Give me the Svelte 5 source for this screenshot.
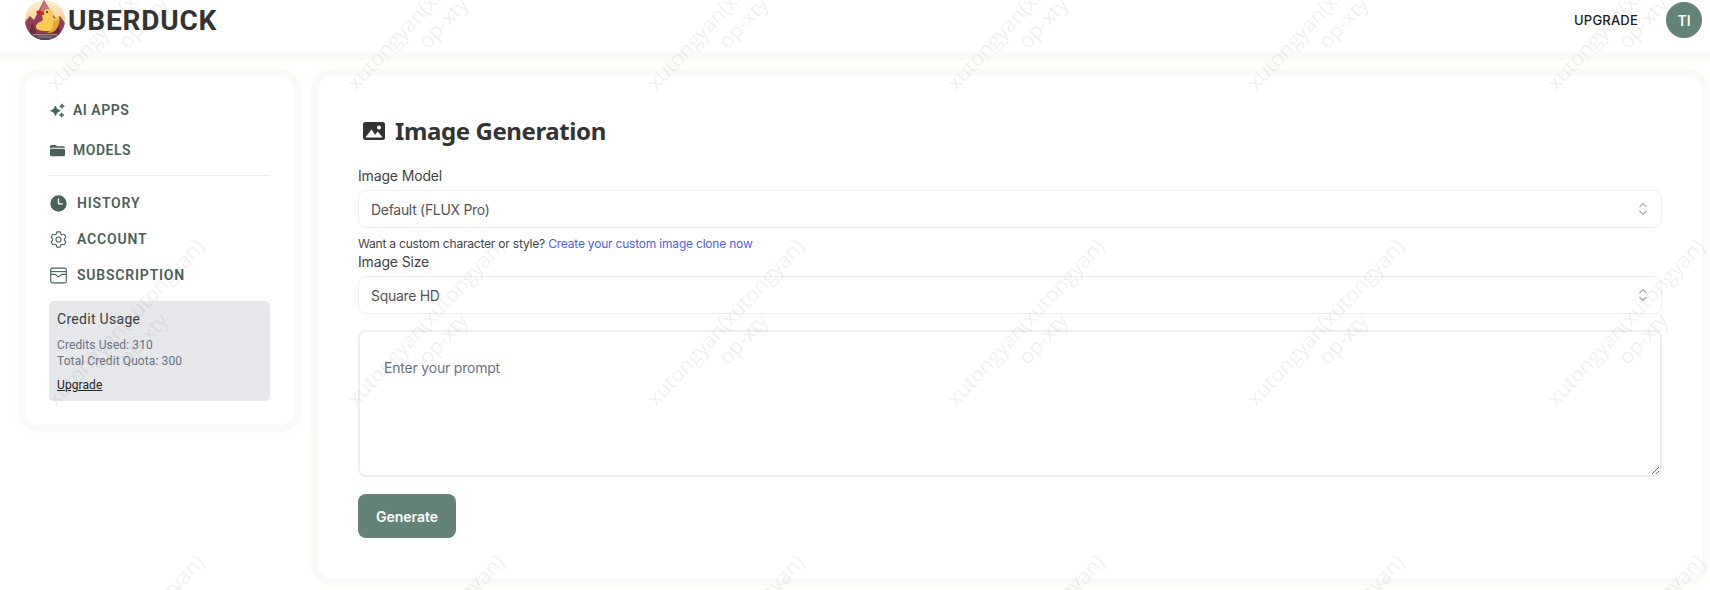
<script>
  const topNav = [
    { label: "AI APPS", icon: "sparkles" },
    { label: "MODELS", icon: "folder" },
  ];
  const bottomNav = [
    { label: "HISTORY", icon: "clock" },
    { label: "ACCOUNT", icon: "cog" },
    { label: "SUBSCRIPTION", icon: "box" },
  ];

  // watermark tiles repeat across the page
  const marks = [];
  for (let row = 0; row < 3; row++) {
    for (let col = -1; col < 6; col++) {
      marks.push({ x: 134 + col * 300, y: 14 + row * 316 });
    }
  }
</script>

{#snippet icon(name)}
  {#if name === "sparkles"}
    <svg class="nav-icon" viewBox="0 0 16 16" fill="currentColor" stroke="currentColor" stroke-width="0.800" stroke-linejoin="round">
      <path d="M5.800 3.200l1.700 3.400 3.400 1.700-3.400 1.700-1.700 3.400-1.700-3.400L.7 8.300l3.400-1.700z" />
      <path d="M12.800.9l.8 1.700 1.700.8-1.700.8-.8 1.700-.8-1.700-1.700-.8 1.700-.8z" />
      <path d="M12.400 10.400l.8 1.600 1.600.8-1.600.8-.8 1.600-.8-1.600-1.600-.8 1.600-.8z" />
    </svg>
  {:else if name === "folder"}
    <svg class="nav-icon" viewBox="0 0 16 16" fill="currentColor">
      <path d="M1.600 2h3.700c.4 0 .8.200 1.100.5l1 1h6.900c.9 0 1.600.7 1.600 1.500H2.200C1.500 5 .9 5.300.5 5.800c-.3-.2-.5-.4-.5-.8V3.600C0 2.700.7 2 1.600 2z" />
      <path d="M1.500 6h13c.8 0 1.500.6 1.500 1.400v5c0 .9-.7 1.600-1.600 1.600H1.600C.7 14 0 13.300 0 12.400V7.500C0 6.700.7 6 1.500 6z" />
    </svg>
  {:else if name === "clock"}
    <svg class="nav-icon wide" viewBox="0 0 24 24">
      <circle cx="12" cy="12" r="11.500" fill="currentColor" />
      <path d="M12 5.500V12.500H17.500" fill="none" stroke="#fff" stroke-width="2" stroke-linecap="round" stroke-linejoin="round" />
    </svg>
  {:else if name === "cog"}
    <svg class="nav-icon wide" viewBox="2 2 20 20" fill="none" stroke="currentColor" stroke-width="1.300">
      <path d="M9.594 3.94c.09-.542.56-.94 1.11-.94h2.593c.55 0 1.020.398 1.110.94l.213 1.281c.063.374.313.686.645.87.074.04.147.083.22.127.325.196.72.257 1.075.124l1.217-.456a1.125 1.125 0 0 1 1.370.49l1.296 2.247a1.125 1.125 0 0 1-.26 1.431l-1.003.827c-.293.241-.438.613-.43.992a7.723 7.723 0 0 1 0 .255c-.008.378.137.75.43.991l1.004.827c.424.35.534.955.26 1.43l-1.298 2.247a1.125 1.125 0 0 1-1.369.491l-1.217-.456c-.355-.133-.75-.072-1.076.124a6.470 6.470 0 0 1-.22.128c-.331.183-.581.495-.644.869l-.213 1.281c-.09.543-.56.94-1.110.94h-2.594c-.55 0-1.019-.398-1.110-.94l-.213-1.281c-.062-.374-.312-.686-.644-.87a6.520 6.520 0 0 1-.22-.127c-.325-.196-.72-.257-1.076-.124l-1.217.456a1.125 1.125 0 0 1-1.369-.49l-1.297-2.247a1.125 1.125 0 0 1 .26-1.431l1.004-.827c.292-.24.437-.613.43-.991a6.932 6.932 0 0 1 0-.255c.007-.38-.138-.751-.43-.992l-1.004-.827a1.125 1.125 0 0 1-.26-1.430l1.297-2.247a1.125 1.125 0 0 1 1.370-.491l1.216.456c.356.133.751.072 1.076-.124.072-.044.146-.086.22-.128.332-.183.582-.495.644-.869l.214-1.280Z" />
      <path d="M15 12a3 3 0 1 1-6 0 3 3 0 0 1 6 0Z" />
    </svg>
  {:else}
    <svg class="nav-icon wide" viewBox="0 0 24 24" fill="none" stroke="currentColor" stroke-width="1.600" stroke-linejoin="round">
      <rect x="1" y="1.500" width="22" height="21" rx="2.500" />
      <path d="M1 6.500h22" />
      <path d="M1 10.500h6.500l4.500 3.500 4.500-3.500H23" />
    </svg>
  {/if}
{/snippet}

<header class="topbar">
  <div class="brand">
    <svg class="logo" viewBox="0 0 40 40">
      <defs>
        <clipPath id="logo-clip"><circle cx="20" cy="20" r="20" /></clipPath>
        <linearGradient id="logo-sky" x1="0" y1="0" x2="0" y2="1">
          <stop offset="0" stop-color="#fdf3d4" />
          <stop offset="0.6" stop-color="#f8c98c" />
        </linearGradient>
      </defs>
      <g clip-path="url(#logo-clip)">
        <rect width="40" height="40" fill="url(#logo-sky)" />
        <path d="M0 22l5-6 4 4L19 0l6 10 6 9 4-3 5 7v17H0z" fill="#8f4058" />
        <path d="M19 0l6 10-3 4-2-5-3 5-2-3z" fill="#c9737c" />
        <path d="M4 34l3-11 3 5 2 6zM36 34l-3-10-3 5-2 5z" fill="#6b2c42" />
        <path d="M11 27c0-3 3-5 6-6 2-1 0-3 0-6 0-3 3-6 6-6s6 3 5 7c-.4 2 2 3 4 2l2-2c1 3 0 6-1 9-1 4-5 6-11 6s-11-1-11-4z" fill="#f8cb55" />
        <path d="M28 21c3 0 5-1 6-4 1 4 0 8-2 11-2 4-6 5-10 5 4-2 7-6 6-12z" fill="#e6a635" />
        <path d="M19 12c-4-2-7-2-8 0 1 2 5 3 8 3z" fill="#d8262c" />
        <circle cx="22" cy="12" r="1" fill="#222" />
        <rect y="33" width="40" height="7" fill="#54465e" />
        <path d="M8 34h24v1.200H8zM13 36.500h14v1H13z" fill="#a68a7c" />
      </g>
    </svg>
    <span class="wordmark">UBERDUCK</span>
  </div>
  <div class="account">
    <span class="upgrade">UPGRADE</span>
    <span class="avatar">TI</span>
  </div>
</header>

<div class="page">
  <aside class="card sidebar">
    <nav class="nav-top">
      {#each topNav as item}
        <div class="nav-item first">{@render icon(item.icon)}<span>{item.label}</span></div>
      {/each}
    </nav>
    <hr />
    <nav class="nav-bottom">
      {#each bottomNav as item}
        <div class="nav-item second">{@render icon(item.icon)}<span>{item.label}</span></div>
      {/each}
    </nav>
    <div class="credits">
      <div class="credits-title">Credit Usage</div>
      <div class="credits-line first-line">Credits Used: 310</div>
      <div class="credits-line">Total Credit Quota: 300</div>
      <span class="credits-link">Upgrade</span>
    </div>
  </aside>

  <main class="card content">
    <h1>
      <svg class="title-icon" viewBox="0 0 22 18">
        <path fill="#333" fill-rule="evenodd" d="M2.500 0h17A2.500 2.500 0 0 1 22 2.500v13a2.500 2.500 0 0 1-2.500 2.500h-17A2.500 2.500 0 0 1 0 15.500v-13A2.500 2.500 0 0 1 2.500 0zM16 3.400a2 2 0 1 0 0 4 2 2 0 0 0 0-4zM2.400 15.600h17.200l-4.800-6-2.800 3.200-3.400-5.200z" />
      </svg>
      Image Generation
    </h1>

    <label class="field-label" for="model">Image Model</label>
    <div class="select-wrap">
      <select id="model"><option>Default (FLUX Pro)</option></select>
      <svg class="chevrons" viewBox="0 0 10 14" fill="none" stroke="#a8a8a8" stroke-width="1.200"><path d="M1.500 5L5 1.500 8.500 5M1.500 9L5 12.500 8.500 9" /></svg>
    </div>
    <p class="hint">Want a custom character or style? <span class="hint-link">Create your custom image clone now</span></p>

    <label class="field-label" for="size">Image Size</label>
    <div class="select-wrap">
      <select id="size"><option>Square HD</option></select>
      <svg class="chevrons" viewBox="0 0 10 14" fill="none" stroke="#a8a8a8" stroke-width="1.200"><path d="M1.500 5L5 1.500 8.500 5M1.500 9L5 12.500 8.500 9" /></svg>
    </div>

    <textarea placeholder="Enter your prompt"></textarea>
    <button>Generate</button>
  </main>
</div>

<div class="watermarks" aria-hidden="true">
  {#each marks as m}
    <div class="mark" style="left: {m.x}px; top: {m.y}px">xutongyan(xutongyan)<br />op-xty</div>
  {/each}
</div>

<style>
  :global(html), :global(body) {
    margin: 0;
    height: 590px;
    overflow: hidden;
    background: #fff;
  }

  :global(*) {
    box-sizing: border-box;
  }

  .topbar {
    height: 52px;
    display: flex;
    justify-content: space-between;
    align-items: flex-start;
    padding: 0 8px 0 25px;
    background: #fff;
    position: relative;
  }

  .brand {
    display: flex;
    align-items: center;
    height: 40px;
  }

  .logo {
    width: 40px;
    height: 40px;
  }

  .wordmark {
    font-family: "Roboto", sans-serif;
    font-size: 28px;
    font-weight: 700;
    color: #333;
    letter-spacing: 0.800px;
    margin-left: 3px;
  }

  .account {
    display: flex;
    align-items: center;
    gap: 28px;
    height: 40px;
  }

  .upgrade {
    font-family: "Inter", sans-serif;
    font-size: 13px;
    font-weight: 500;
    letter-spacing: 0.200px;
    color: #222;
  }

  .avatar {
    width: 36px;
    height: 36px;
    border-radius: 50%;
    background: #638377;
    color: #fff;
    font-family: "Inter", sans-serif;
    font-size: 14px;
    font-weight: 600;
    display: flex;
    align-items: center;
    justify-content: center;
  }

  .page {
    display: flex;
    align-items: flex-start;
    gap: 24px;
    padding: 24px 8px 0 25px;
    background: #fff;
    box-shadow: inset 0 8px 0 #f8faf6, inset 0 12px 0 #fdfef9;
    height: 538px;
  }

  .card {
    background: #fff;
    border-radius: 14px;
    box-shadow: 0 0 0 7px #f7faf6, 0 0 0 13px #feFFfa;
  }

  .sidebar {
    width: 269px;
    height: 349px;
    padding: 14px 24px 0;
    flex-shrink: 0;
  }

  .nav-item {
    display: flex;
    align-items: center;
    font-family: "Roboto", sans-serif;
    font-size: 14px;
    font-weight: 600;
    letter-spacing: 0.500px;
    color: #4b5f58;
  }

  .nav-item.first {
    height: 40px;
    padding-left: 1px;
    gap: 8px;
  }

  .nav-item.second {
    height: 36px;
    padding-left: 1px;
    gap: 10px;
    letter-spacing: 0.800px;
  }

  .nav-icon {
    width: 15px;
    height: 15px;
    color: #4a6358;
    flex-shrink: 0;
  }

  .nav-icon.wide {
    width: 17px;
    height: 17px;
  }

  hr {
    border: none;
    border-top: 1px solid #eceeee;
    margin: 5px 0 9px;
  }

  .credits {
    height: 100px;
    margin-top: 8px;
    padding: 8px;
    background: #e5e7eb;
    border-radius: 5px;
    font-family: "Roboto", sans-serif;
  }

  .credits-title {
    font-size: 14px;
    line-height: 20px;
    color: #3a4240;
    letter-spacing: 0.300px;
  }

  .credits-line {
    font-size: 12px;
    line-height: 16px;
    color: #6b7280;
    letter-spacing: 0.100px;
  }

  .first-line {
    margin-top: 8px;
  }

  .credits-link {
    display: inline-block;
    margin-top: 8px;
    font-size: 12px;
    line-height: 16px;
    letter-spacing: 0.100px;
    color: #222;
    text-decoration: underline;
  }

  .content {
    flex: 1;
    height: 502px;
    padding: 39px 40px 40px;
    font-family: "Inter", sans-serif;
    font-size: 14px;
    color: #333;
  }

  h1 {
    display: flex;
    align-items: center;
    gap: 10px;
    margin: 0 0 19px;
    padding-left: 5px;
    height: 32px;
    font-family: "Noto Sans", sans-serif;
    font-size: 24px;
    font-weight: 700;
    letter-spacing: -0.400px;
    color: #333;
    line-height: 32px;
  }

  .title-icon {
    width: 22px;
    height: 18px;
  }

  .field-label {
    display: block;
    line-height: 20px;
    letter-spacing: -0.150px;
    color: #444;
    margin-bottom: 4px;
  }

  .select-wrap {
    position: relative;
    height: 38px;
  }

  select {
    width: 100%;
    height: 38px;
    padding: 0 12px;
    appearance: none;
    background: #fff;
    border: 1px solid #eeeeee;
    border-radius: 8px;
    font-family: inherit;
    font-size: 14px;
    letter-spacing: -0.300px;
    color: #555;
  }

  .chevrons {
    position: absolute;
    right: 14px;
    top: 12px;
    width: 10px;
    height: 14px;
  }

  .hint {
    margin: 8px 0 0;
    font-size: 12px;
    line-height: 16px;
    letter-spacing: -0.200px;
    color: #444;
  }

  .hint-link {
    color: #4f5fe8;
  }

  textarea {
    display: block;
    width: 100%;
    height: 147px;
    margin-top: 16px;
    padding: 26px 24px 24px;
    border: 2px solid #eeeeee;
    border-radius: 8px;
    outline: none;
    font-family: inherit;
    font-size: 14px;
    line-height: 20px;
    letter-spacing: -0.200px;
  }

  textarea::placeholder {
    color: #6b7280;
  }

  button {
    display: block;
    width: 98px;
    height: 44px;
    margin-top: 17px;
    border: none;
    border-radius: 8px;
    background: #638377;
    color: #fff;
    font-family: inherit;
    font-size: 14px;
    font-weight: 600;
  }

  .watermarks {
    position: fixed;
    inset: 0;
    overflow: hidden;
    pointer-events: none;
  }

  .mark {
    position: absolute;
    width: 300px;
    transform: translate(-50%, -50%) rotate(-47deg);
    font-family: "Open Sans", sans-serif;
    font-size: 21px;
    line-height: 24px;
    text-align: center;
    white-space: nowrap;
    color: rgba(0, 0, 0, 0.06);
  }
</style>
